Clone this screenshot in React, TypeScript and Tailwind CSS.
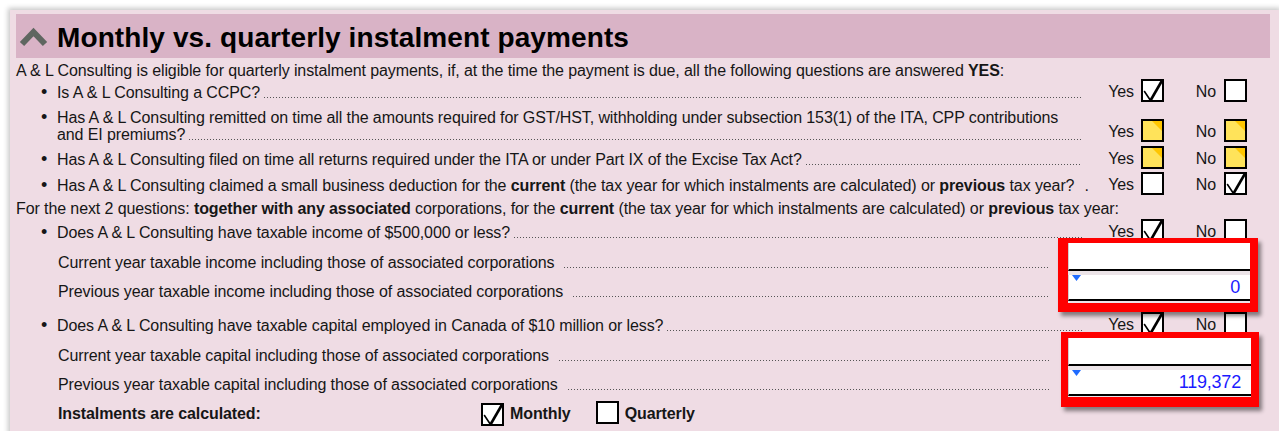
import React from "react";

type BoxState = "checked" | "empty" | "pending";

// Checkbox used throughout the form
function Box({ state }: { state: BoxState }) {
  return (
    <span
      className={`relative inline-block w-[23px] h-[23px] border-2 border-black shrink-0 ${
        state === "pending" ? "bg-[#ffe35a]" : "bg-white"
      }`}
    >
      {state === "pending" && (
        <span className="absolute top-0 right-0 w-[10px] h-[10px] bg-[#ffc600] [clip-path:polygon(0_0,100%_0,100%_100%)]" />
      )}
      {state === "checked" && (
        <svg
          className="absolute -left-[2px] -top-[2px]"
          width="23"
          height="23"
          viewBox="0 0 23 23"
        >
          <line x1="3.5" y1="12.5" x2="9.5" y2="21.5" stroke="#000" strokeWidth="1.6" strokeLinecap="round" />
          <line x1="9.5" y1="21.5" x2="20.5" y2="2.5" stroke="#000" strokeWidth="2.6" strokeLinecap="round" />
        </svg>
      )}
    </span>
  );
}

function YesNo({ yes, no }: { yes: BoxState; no: BoxState }) {
  return (
    <div className="flex items-center shrink-0">
      <span className="w-[52px] text-right">Yes</span>
      <span className="ml-[7px]">
        <Box state={yes} />
      </span>
      <span className="w-[52px] text-right">No</span>
      <span className="ml-[8px]">
        <Box state={no} />
      </span>
    </div>
  );
}

// Dot leader, sits on the text baseline
function Leader({ className = "" }: { className?: string }) {
  return (
    <span
      className={`flex-1 h-[1px] ml-[4px] bg-[linear-gradient(to_right,#555_1px,transparent_1px)] bg-[length:3px_1px] bg-repeat-x ${className}`}
    />
  );
}

function Bullet() {
  return <span className="w-[16px] shrink-0 text-[18px]">•</span>;
}

function QuestionRow({
  children,
  yes,
  no,
  height,
}: {
  children: React.ReactNode;
  yes: BoxState;
  no: BoxState;
  height: string;
}) {
  return (
    <div className={`flex items-center ${height}`}>
      <div className="w-[1066px] flex items-baseline pl-[25px]">
        <Bullet />
        <span className="whitespace-nowrap">{children}</span>
        <Leader />
      </div>
      <YesNo yes={yes} no={no} />
    </div>
  );
}

function AmountLabel({ children, className }: { children: React.ReactNode; className: string }) {
  return (
    <div className={`flex items-center h-[28px] ${className}`}>
      <div className="w-[1034px] flex items-baseline pl-[42px]">
        <span className="whitespace-nowrap">{children}</span>
        <Leader className="ml-[10px]" />
      </div>
    </div>
  );
}

function AmountFrame({
  value,
  className,
}: {
  value: string;
  className: string;
}) {
  return (
    <div
      className={`absolute border-[#ff0000] bg-[#ece4e8] shadow-[3px_4px_4px_rgba(0,0,0,0.45)] ${className}`}
    >
      <div className="h-[28px] bg-white border-b-2 border-black border-l border-l-[#cfcfcf]" />
      <div className="relative mt-[4px] h-[26px] bg-white border-b-2 border-black border-l border-l-[#cfcfcf] flex items-center justify-end pr-[10px]">
        <span className="absolute left-[3px] top-0 w-[9px] h-[6px] bg-[#1f6bff] [clip-path:polygon(0_0,100%_0,50%_100%)]" />
        <span className="text-[18px] text-[#1b1bff] tracking-[-0.2px]">{value}</span>
      </div>
    </div>
  );
}

export default function App() {
  return (
    <div className="relative w-[1279px] h-[431px] overflow-hidden bg-white font-['Liberation_Sans',Arial,sans-serif] text-[16px] tracking-[-0.1px] text-[#161616] leading-none">
      <div className="ml-[10px] mt-[10px] h-[440px] bg-[#efdce4] pl-[6px] pr-[9px] pt-[4px] shadow-[0_0_5px_2px_rgba(0,0,0,0.22)]">
        {/* Section header */}
        <div className="h-[44px] bg-[#d9b3c6] flex items-center">
          <svg className="ml-[3px] mt-[2px]" width="29" height="20" viewBox="0 0 29 20">
            <polyline
              points="3,17 14.5,5 26,17"
              fill="none"
              stroke="#5f6660"
              strokeWidth="6"
            />
          </svg>
          <h1 className="ml-[9px] mt-[3px] text-[28px] font-bold text-black tracking-[0.1px]">
            Monthly vs. quarterly instalment payments
          </h1>
        </div>

        <div className="h-[22px] pt-[3px] flex items-center">
          A &amp; L Consulting is eligible for quarterly instalment payments, if, at the time the payment is due, all the following questions are answered&nbsp;<b>YES</b>:
        </div>

        <QuestionRow yes="checked" no="empty" height="h-[24px]">
          Is A &amp; L Consulting a CCPC?
        </QuestionRow>

        <div className="flex h-[42px]">
          <div className="w-[1066px] pl-[25px] pt-[5px] leading-[17px]">
            <div className="flex items-baseline">
              <Bullet />
              <span className="whitespace-nowrap">
                Has A &amp; L Consulting remitted on time all the amounts required for GST/HST, withholding under subsection 153(1) of the ITA, CPP contributions
              </span>
            </div>
            <div className="flex items-baseline pl-[16px]">
              <span className="whitespace-nowrap">and EI premiums?</span>
              <Leader />
            </div>
          </div>
          <div className="self-end mb-[1px] flex items-center">
            <YesNo yes="pending" no="pending" />
          </div>
        </div>

        <QuestionRow yes="pending" no="pending" height="h-[26px]">
          Has A &amp; L Consulting filed on time all returns required under the ITA or under Part IX of the Excise Tax Act?
        </QuestionRow>

        <div className="flex items-center h-[26px]">
          <div className="w-[1066px] flex items-baseline pl-[25px]">
            <Bullet />
            <span className="whitespace-nowrap">
              Has A &amp; L Consulting claimed a small business deduction for the <b>current</b> (the tax year for which instalments are calculated) or <b>previous</b> tax year?
            </span>
            <span className="ml-[10px]">.</span>
          </div>
          <YesNo yes="empty" no="checked" />
        </div>

        <div className="h-[22px] flex items-center whitespace-nowrap">
          For the next 2 questions:&nbsp;<b>together with any associated</b>&nbsp;corporations, for the&nbsp;<b>current</b>&nbsp;(the tax year for which instalments are calculated) or&nbsp;<b>previous</b>&nbsp;tax year:
        </div>

        <QuestionRow yes="checked" no="empty" height="h-[23px]">
          Does A &amp; L Consulting have taxable income of $500,000 or less?
        </QuestionRow>

        <AmountLabel className="mt-[6px]">
          Current year taxable income including those of associated corporations
        </AmountLabel>
        <AmountLabel className="mt-[1px]">
          Previous year taxable income including those of associated corporations
        </AmountLabel>

        <div className="mt-[7px]">
          <QuestionRow yes="checked" no="empty" height="h-[24px]">
            Does A &amp; L Consulting have taxable capital employed in Canada of $10 million or less?
          </QuestionRow>
        </div>

        <AmountLabel className="mt-[5px]">
          Current year taxable capital including those of associated corporations
        </AmountLabel>
        <AmountLabel className="mt-[1px]">
          Previous year taxable capital including those of associated corporations
        </AmountLabel>

        <div className="mt-[1px] h-[28px] flex items-center">
          <b className="w-[465px] pl-[42px]">Instalments are calculated:</b>
          <Box state="checked" />
          <b className="ml-[6px]">Monthly</b>
          <span className="ml-[25px]">
            <Box state="empty" />
          </span>
          <b className="ml-[6px]">Quarterly</b>
        </div>
      </div>

      {/* Highlight frames around the amount fields */}
      <AmountFrame
        value="0"
        className="left-[1058px] top-[238px] w-[200px] h-[74px] border-t-[5px] border-l-[10px] border-r-[8px] border-b-[9px]"
      />
      <AmountFrame
        value="119,372"
        className="left-[1061px] top-[332px] w-[198px] h-[75px] border-t-[6px] border-l-[7px] border-r-[8px] border-b-[10px]"
      />
    </div>
  );
}
